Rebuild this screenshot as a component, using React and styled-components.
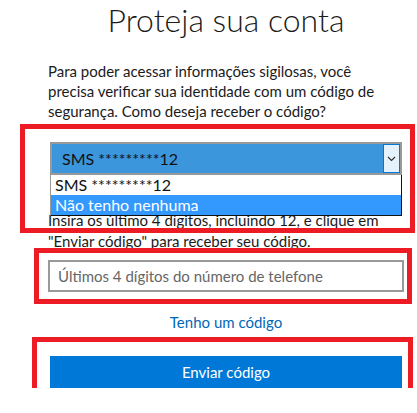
import React from 'react'
import styled, { createGlobalStyle } from 'styled-components'

const GlobalStyle = createGlobalStyle`
  html, body {
    margin: 0;
    padding: 0;
    background: #fff;
  }
  body {
    font-family: 'Segoe UI', Lato, 'Liberation Sans', sans-serif;
    color: #1b1b1b;
  }
`

const Page = styled.main`
  width: 356px;
  padding-left: 48px;
  display: flex;
  flex-direction: column;
`

const Title = styled.h1`
  margin: 0;
  font-size: 32px;
  font-weight: 300;
  line-height: 40px;
  text-align: center;
  color: #1b1b1b;
`

const Text = styled.p`
  margin: ${p => p.$top}px 0 0;
  width: 340px;
  font-size: 15px;
  line-height: ${p => p.$lh || 20}px;
`

const Field = styled.div`
  position: relative;
  margin-top: ${p => p.$top}px;
`

// red annotation frame drawn over the field
const Mark = styled.div`
  position: absolute;
  top: ${p => p.$t}px;
  left: ${p => p.$l}px;
  right: ${p => p.$r}px;
  bottom: ${p => p.$b}px;
  border: 5px solid #ed1c24;
  pointer-events: none;
  z-index: 3;
`

const SelectBox = styled.div`
  box-sizing: border-box;
  margin: 0 2px;
  height: 33px;
  display: flex;
  align-items: center;
  justify-content: space-between;
  border: 2px solid #999;
  background: #3c96dc;
  font-size: 16px;
  color: #111;
  padding-left: 10px;
`

const ArrowButton = styled.span`
  box-sizing: border-box;
  align-self: stretch;
  width: 17px;
  display: flex;
  align-items: center;
  justify-content: center;
  background: #e5f1fb;
  border: 1px solid #0078d7;
`

const Menu = styled.ul`
  position: absolute;
  top: 100%;
  left: 2px;
  right: 2px;
  margin: 0;
  padding: 0;
  list-style: none;
  background: #fff;
  border: 1px solid #111;
  border-top: none;
  border-left-color: #999;
  z-index: 2;
`

const Option = styled.li`
  height: 20px;
  line-height: 20px;
  padding-left: 4px;
  font-size: 16px;
  background: ${p => (p.$active ? '#3399ff' : '#fff')};
  color: ${p => (p.$active ? '#fff' : '#111')};
`

const Input = styled.input`
  box-sizing: border-box;
  display: block;
  width: 356px;
  height: 32px;
  border: 2px solid #999;
  padding: 0 8px;
  font-family: inherit;
  font-size: 15px;
  color: #1b1b1b;
  outline: none;
  &::placeholder {
    color: #666;
  }
`

const LinkText = styled.a`
  margin-top: 20px;
  align-self: center;
  font-size: 15px;
  line-height: 20px;
  color: #0067b8;
  text-decoration: none;
`

const Button = styled.button`
  box-sizing: border-box;
  width: 352px;
  height: 32px;
  margin: 0 2px;
  border: none;
  background: #0078d7;
  color: #fff;
  font-family: inherit;
  font-size: 15px;
`

const Chevron = () => (
  <svg width="9" height="6" viewBox="0 0 9 6">
    <path d="M1 1l3.5 3.5L8 1" fill="none" stroke="#333" strokeWidth="1.2" />
  </svg>
)

export default function App() {
  return (
    <>
      <GlobalStyle />
      <Page>
        <Title>Proteja sua conta</Title>
        <Text $top={21}>
          Para poder acessar informações sigilosas, você precisa verificar sua
          identidade com um código de segurança. Como deseja receber o código?
        </Text>

        <Field $top={21}>
          <SelectBox>
            <span>SMS *********12</span>
            <ArrowButton><Chevron /></ArrowButton>
          </SelectBox>
          <Menu>
            <Option>SMS *********12</Option>
            <Option $active>Não tenho nenhuma</Option>
          </Menu>
          <Mark $t={-18} $l={-28} $r={-11} $b={-58} />
        </Field>

        <Text $top={35} $lh={21}>
          Insira os último 4 dígitos, incluindo 12, e clique em "Enviar código"
          para receber seu código.
        </Text>

        <Field $top={8}>
          <Input placeholder="Últimos 4 dígitos do número de telefone" />
          <Mark $t={-12} $l={-14} $r={-8} $b={-12} />
        </Field>

        <LinkText href="#">Tenho um código</LinkText>

        <Field $top={24}>
          <Button>Enviar código</Button>
          <Mark $t={-19} $l={-16} $r={-9} $b={-9} />
        </Field>
      </Page>
    </>
  )
}
